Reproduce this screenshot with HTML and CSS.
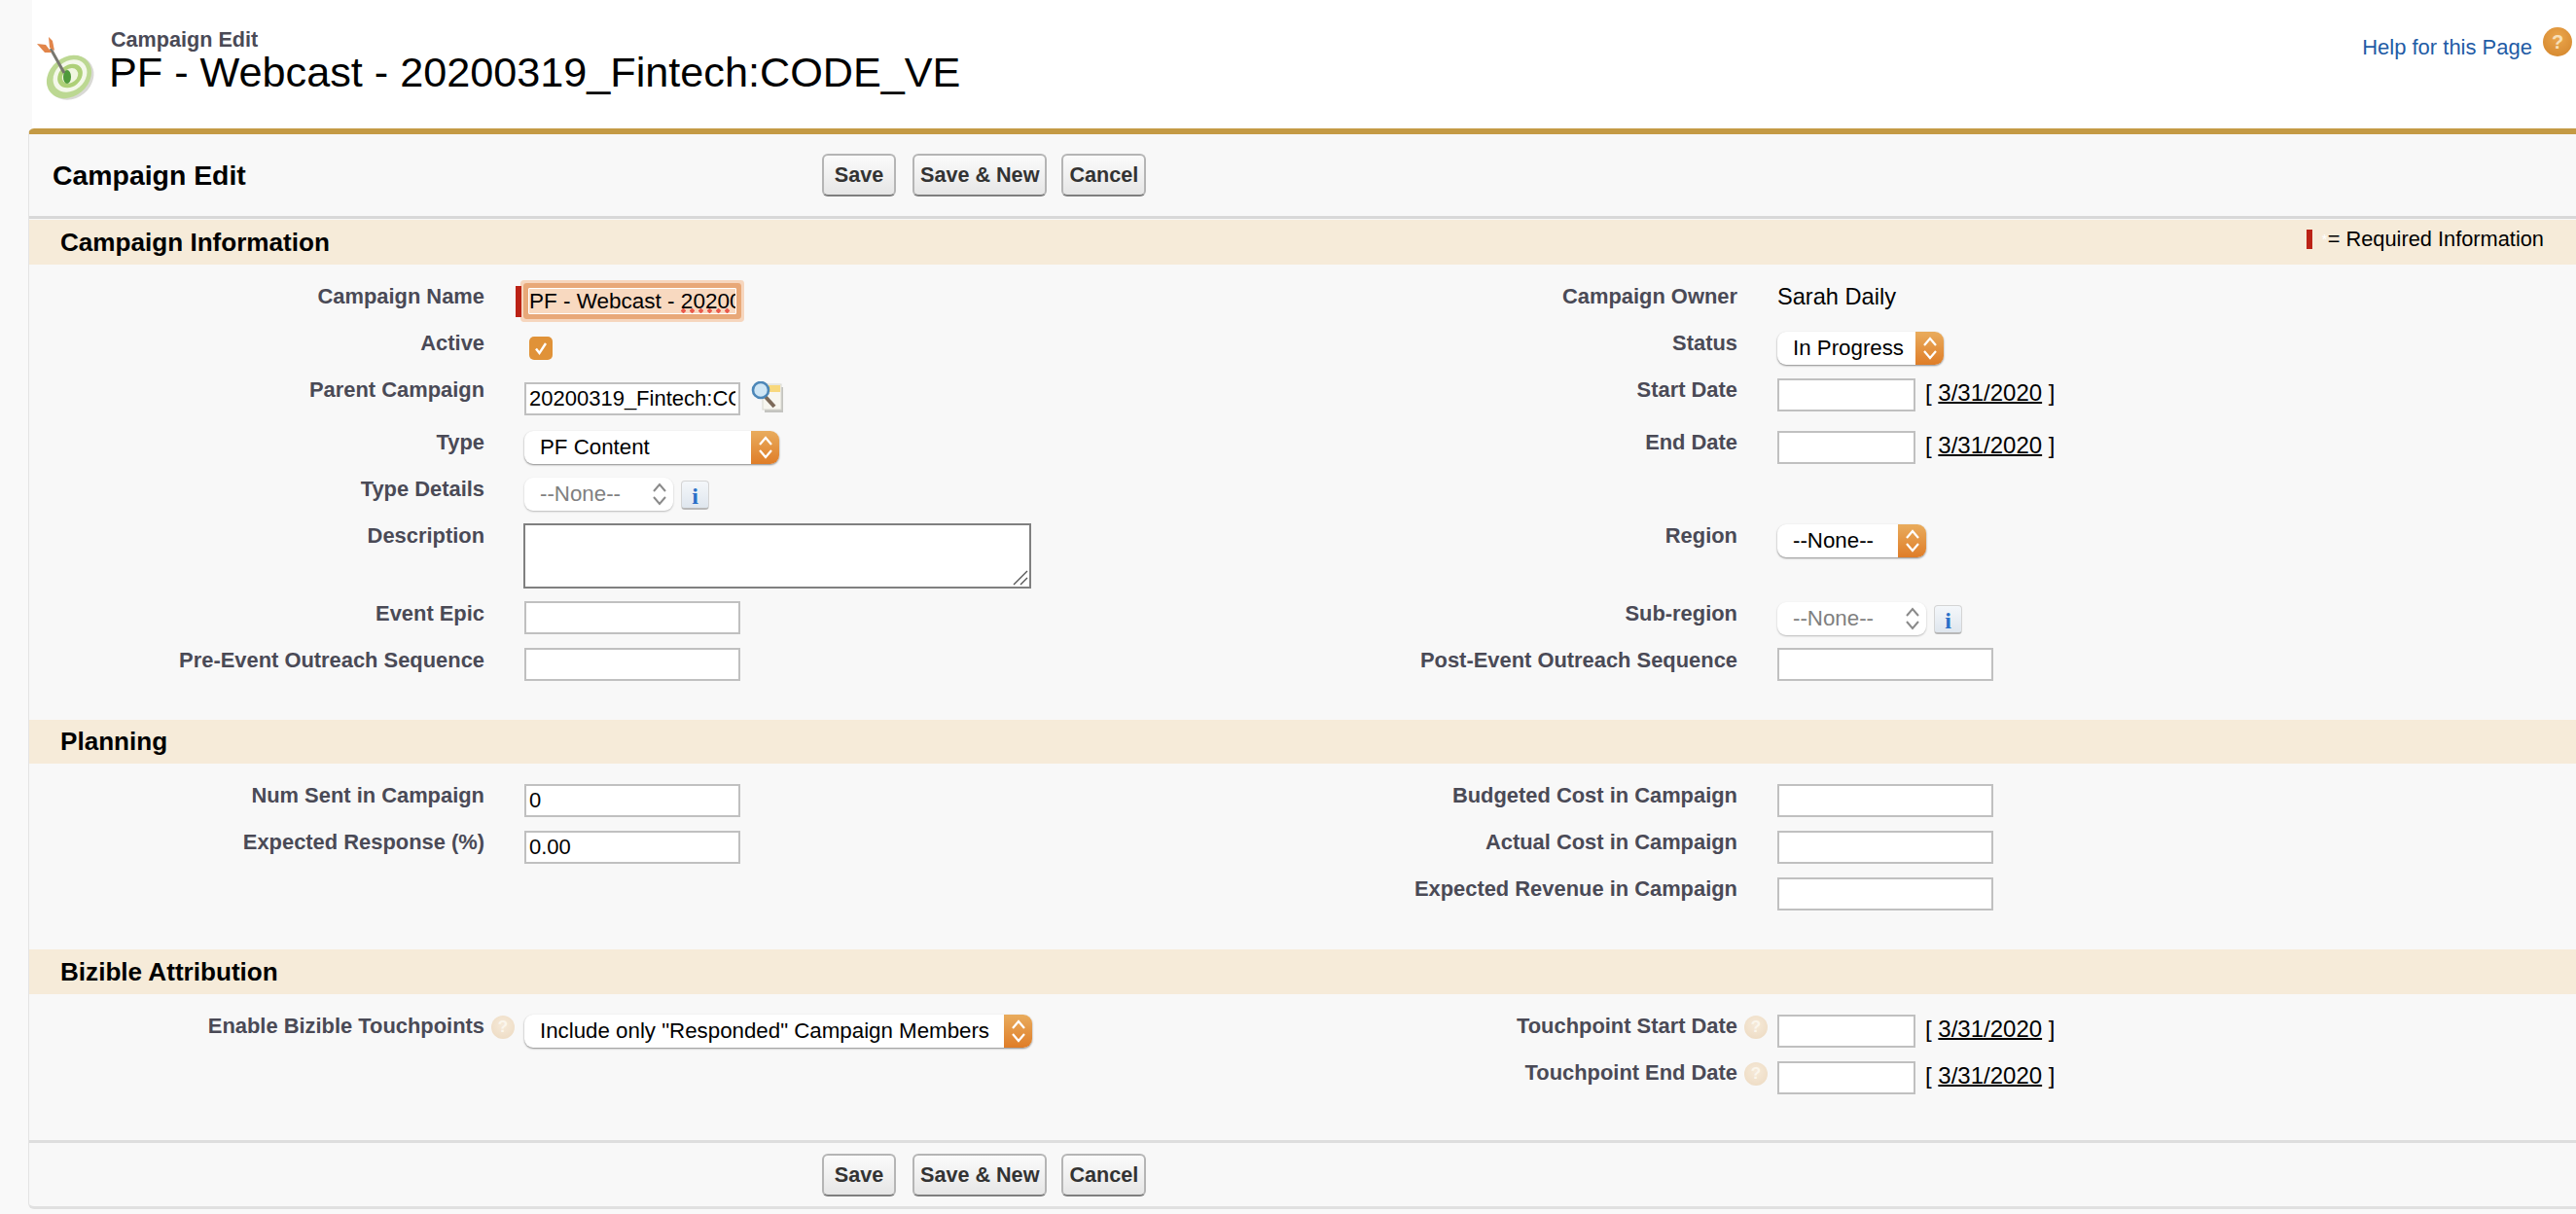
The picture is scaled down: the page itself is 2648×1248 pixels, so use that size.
FILE: index.html
```html
<!DOCTYPE html>
<html lang="en">
  <head>
    <meta charset="UTF-8" />
    <title>Campaign Edit</title>
    <link rel="stylesheet" href="styles.css">
  </head>
  <body>
    <div class="page">
      <div class="page-head">
        <svg class="target-icon" width="62" height="72" viewBox="0 0 62 72">
          <ellipse cx="35" cy="43" rx="25" ry="21" transform="rotate(-40 35 43)" fill="#d9d9d5" />
          <ellipse cx="33" cy="42" rx="25" ry="20" transform="rotate(-40 33 42)" fill="#bcd892" />
          <ellipse cx="34" cy="41" rx="19" ry="15" transform="rotate(-40 34 41)" fill="#f4f8ea" />
          <ellipse cx="34" cy="41" rx="14" ry="11" transform="rotate(-40 34 41)" fill="#aed078" />
          <ellipse cx="34" cy="41" rx="9" ry="7" transform="rotate(-40 34 41)" fill="#f0f6e0" />
          <ellipse cx="31" cy="42" rx="4" ry="7" fill="#4f9a3c" />
          <path d="M14 13 L28 38" stroke="#77776f" stroke-width="3" />
          <path d="M0 8 L9 9 L15 17 L8 17 Z" fill="#e2854a" />
          <path d="M12 1 L16 5 L18 15 L13 12 Z" fill="#e2854a" />
        </svg>
        <div class="page-titles">
          <div class="page-type">Campaign Edit</div>
          <h1 class="page-name">PF - Webcast - 20200319_Fintech:CODE_VE</h1>
        </div>
        <div class="help-link">
          <a href="#">Help for this Page</a>
          <span class="help-circle">?</span>
        </div>
      </div>

      <form class="panel">
        <div class="button-row">
          <h2 class="panel-title">Campaign Edit</h2>
          <div class="buttons">
            <button type="button" class="btn btn-save">Save</button>
            <button type="button" class="btn btn-new">Save &amp; New</button>
            <button type="button" class="btn">Cancel</button>
          </div>
        </div>

        <div class="section-bar section-bar-first">
          <h3>Campaign Information</h3>
          <div class="required-note"><span class="required-mark"></span><span class="required-star">*</span>= Required Information</div>
        </div>
        <div class="form-grid grid-info">
          <label class="lbl">Campaign Name</label>
          <div class="field">
            <div class="focus-wrap">
              <span class="required-bar"></span>
              <input class="input input-focus" type="text" value="PF - Webcast - 20200319_Fintech:CODE_VE" spellcheck="false" />
              <span class="spell-dots"></span>
            </div>
          </div>
          <label class="lbl">Campaign Owner</label>
          <div class="field field-text">Sarah Daily</div>

          <label class="lbl">Active</label>
          <div class="field">
            <span class="check">
              <svg width="24" height="24" viewBox="0 0 24 24"><path d="M7 12.5 L10.5 17 L17 7" fill="none" stroke="#fff" stroke-width="2.4" /></svg>
            </span>
          </div>
          <label class="lbl">Status</label>
          <div class="field">
            <div class="select w-status"><span>In Progress</span><span class="select-arrows"><svg width="20" height="26" viewBox="0 0 20 26"><path d="M4 10 L10 3 L16 10 M4 16 L10 23 L16 16" fill="none" stroke="#fff" stroke-width="2.2" /></svg></span></div>
          </div>

          <label class="lbl">Parent Campaign</label>
          <div class="field field-low">
            <input class="input" type="text" value="20200319_Fintech:CODE_VE" />
            <svg class="lookup" width="34" height="32" viewBox="0 0 34 32">
              <rect x="14" y="6" width="19" height="26" fill="#c4c4c0" />
              <rect x="12" y="3" width="19" height="26" fill="#f7f6ef" stroke="#d8d8d0" />
              <rect x="13" y="4" width="17" height="7" fill="#f8d87c" />
              <path d="M14 15 L24 26" stroke="#7d6a58" stroke-width="4" />
              <circle cx="10" cy="9" r="8" fill="#cfe6f5" stroke="#4d87b8" stroke-width="2.6" />
            </svg>
          </div>
          <label class="lbl">Start Date</label>
          <div class="field">
            <input class="input input-date" type="text" />
            <span class="date-hint">[ <a href="#">3/31/2020</a> ]</span>
          </div>

          <label class="lbl">Type</label>
          <div class="field">
            <div class="select w-type"><span>PF Content</span><span class="select-arrows"><svg width="20" height="26" viewBox="0 0 20 26"><path d="M4 10 L10 3 L16 10 M4 16 L10 23 L16 16" fill="none" stroke="#fff" stroke-width="2.2" /></svg></span></div>
          </div>
          <label class="lbl">End Date</label>
          <div class="field">
            <input class="input input-date" type="text" />
            <span class="date-hint">[ <a href="#">3/31/2020</a> ]</span>
          </div>

          <label class="lbl">Type Details</label>
          <div class="field">
            <div class="select select-off w-none"><span>--None--</span><span class="select-arrows"><svg width="20" height="26" viewBox="0 0 20 26"><path d="M4 10 L10 3 L16 10 M4 16 L10 23 L16 16" fill="none" stroke="#8a8a8a" stroke-width="2" /></svg></span></div>
            <span class="info-btn">i</span>
          </div>
          <div></div>
          <div></div>

          <label class="lbl">Description</label>
          <div class="field field-tight">
            <div class="textarea-wrap">
              <textarea class="textarea"></textarea>
              <svg class="grip" width="16" height="16" viewBox="0 0 16 16"><path d="M1 15 L15 1 M8 15 L15 8" stroke="#555" stroke-width="1.4" /></svg>
            </div>
          </div>
          <label class="lbl">Region</label>
          <div class="field">
            <div class="select w-region"><span>--None--</span><span class="select-arrows"><svg width="20" height="26" viewBox="0 0 20 26"><path d="M4 10 L10 3 L16 10 M4 16 L10 23 L16 16" fill="none" stroke="#fff" stroke-width="2.2" /></svg></span></div>
          </div>

          <label class="lbl">Event Epic</label>
          <div class="field field-tight"><input class="input" type="text" /></div>
          <label class="lbl">Sub-region</label>
          <div class="field">
            <div class="select select-off w-none"><span>--None--</span><span class="select-arrows"><svg width="20" height="26" viewBox="0 0 20 26"><path d="M4 10 L10 3 L16 10 M4 16 L10 23 L16 16" fill="none" stroke="#8a8a8a" stroke-width="2" /></svg></span></div>
            <span class="info-btn">i</span>
          </div>

          <label class="lbl">Pre-Event Outreach Sequence</label>
          <div class="field field-tight"><input class="input" type="text" /></div>
          <label class="lbl">Post-Event Outreach Sequence</label>
          <div class="field field-tight"><input class="input" type="text" /></div>
        </div>

        <div class="section-bar section-bar-short">
          <h3>Planning</h3>
        </div>
        <div class="form-grid grid-planning">
          <label class="lbl">Num Sent in Campaign</label>
          <div class="field"><input class="input" type="text" value="0" /></div>
          <label class="lbl">Budgeted Cost in Campaign</label>
          <div class="field"><input class="input" type="text" /></div>

          <label class="lbl">Expected Response (%)</label>
          <div class="field"><input class="input" type="text" value="0.00" /></div>
          <label class="lbl">Actual Cost in Campaign</label>
          <div class="field"><input class="input" type="text" /></div>

          <div></div>
          <div></div>
          <label class="lbl">Expected Revenue in Campaign</label>
          <div class="field"><input class="input" type="text" /></div>
        </div>

        <div class="section-bar">
          <h3>Bizible Attribution</h3>
        </div>
        <div class="form-grid grid-bizible">
          <label class="lbl">Enable Bizible Touchpoints</label>
          <div class="field field-help">
            <span class="help-faded">?</span>
            <div class="select w-bizible"><span>Include only "Responded" Campaign Members</span><span class="select-arrows"><svg width="20" height="26" viewBox="0 0 20 26"><path d="M4 10 L10 3 L16 10 M4 16 L10 23 L16 16" fill="none" stroke="#fff" stroke-width="2.2" /></svg></span></div>
          </div>
          <label class="lbl">Touchpoint Start Date</label>
          <div class="field field-help">
            <span class="help-faded">?</span>
            <input class="input input-date" type="text" />
            <span class="date-hint">[ <a href="#">3/31/2020</a> ]</span>
          </div>

          <div></div>
          <div></div>
          <label class="lbl">Touchpoint End Date</label>
          <div class="field field-help">
            <span class="help-faded">?</span>
            <input class="input input-date" type="text" />
            <span class="date-hint">[ <a href="#">3/31/2020</a> ]</span>
          </div>
        </div>

        <div class="button-row button-row-bottom">
          <div class="buttons">
            <button type="button" class="btn btn-save">Save</button>
            <button type="button" class="btn btn-new">Save &amp; New</button>
            <button type="button" class="btn">Cancel</button>
          </div>
        </div>
      </form>
    </div>
  </body>
</html>
```

FILE: styles.css
```css
* {
  box-sizing: border-box;
}
html,
body {
  margin: 0;
  padding: 0;
}
body {
  font-family: "Liberation Sans", Arial, sans-serif;
  font-size: 22px;
  color: #000;
  background-color: #f9f9f9;
  height: 1248px;
  overflow: hidden;
}
.page {
  margin-left: 29px;
}
.page-head {
  display: flex;
  height: 132px;
  padding-top: 28px;
  padding-left: 9px;
  background: white;
  border-left: 4px solid #f9f9f9;
}
.target-icon {
  margin-top: 9px;
  margin-left: -4px;
  margin-right: 14px;
  flex: none;
}
.page-titles {
  flex: 1;
}
.page-type {
  font-size: 21.6px;
  font-weight: bold;
  color: #4a4a56;
  line-height: 24px;
  margin-top: 1px;
  margin-bottom: -5px;
}
.page-name {
  font-size: 43.2px;
  font-weight: normal;
  line-height: 52px;
  margin: 0 0 0 -2px;
}
.help-link {
  display: flex;
  align-items: flex-start;
  gap: 11px;
  padding-right: 4px;
}
.help-link a {
  color: #1f5ca6;
  text-decoration: none;
  line-height: 41px;
}
.help-circle {
  width: 30px;
  height: 30px;
  border-radius: 50%;
  background: radial-gradient(circle at 50% 35%, #eba64d, #d2842a);
  color: #f8e0b8;
  font-weight: bold;
  font-size: 20px;
  text-align: center;
  line-height: 30px;
}

.panel {
  background: #f8f8f8;
  border-top: 6px solid #c49a45;
  border-bottom: 3px solid #e0e0e0;
  border-left: 1px solid #e4e4e4;
  border-radius: 6px 0 0 6px;
  height: 1111px;
}
.button-row {
  display: flex;
  align-items: center;
  height: 87px;
  border-bottom: 3px solid #d8d8d8;
}
.panel-title {
  width: 815px;
  margin: 0;
  padding-left: 24px;
  font-size: 28.4px;
  font-weight: bold;
}
.buttons {
  display: flex;
  gap: 15px;
}
.btn {
  height: 44px;
  padding: 0 6px;
  font-family: "Liberation Sans", Arial, sans-serif;
  font-size: 21.6px;
  font-weight: bold;
  color: #333;
  background: linear-gradient(#fbfbfb, #e6e6e6);
  border: 2px solid #b5b5b5;
  border-bottom-color: #7f7f7f;
  border-radius: 6px;
}
.btn-save {
  min-width: 76px;
  margin-right: 2px;
}
.button-row-bottom {
  border-bottom: 0;
  border-top: 3px solid #dedede;
  height: 69px;
  padding-left: 815px;
}

.section-bar {
  display: flex;
  align-items: center;
  justify-content: space-between;
  height: 46px;
  padding-left: 32px;
  background: #f6ebd9;
}
.section-bar-first {
  margin-top: 1px;
}
.section-bar-short {
  height: 45px;
}
.section-bar h3 {
  margin: 0;
  font-size: 26.1px;
  font-weight: bold;
}
.required-note {
  display: flex;
  align-items: center;
  padding-right: 33px;
  font-size: 21.8px;
  margin-top: -6px;
}
.required-mark {
  width: 6px;
  height: 20px;
  margin-right: 10px;
  background: #bb2216;
}
.required-star {
  width: 6px;
  color: #fff;
  font-size: 14px;
}

.form-grid {
  display: grid;
  grid-template-columns: 468px 603px 685px 1fr;
  grid-auto-rows: 48px;
  padding-top: 19px;
}
.grid-info {
  grid-template-rows: 48px 48px 54px 48px 48px 80px 48px 48px;
  padding-bottom: 27px;
}
.grid-planning {
  padding-bottom: 28px;
}
.grid-bizible {
  padding-bottom: 35px;
}
.lbl {
  font-size: 21.9px;
  font-weight: bold;
  color: #4a4a56;
  line-height: 28px;
  text-align: right;
}
.field {
  display: flex;
  align-items: flex-start;
  padding-left: 41px;
  padding-top: 2px;
}
.field-tight {
  padding-top: 1px;
}
.field-low {
  padding-top: 6px;
}
.field-text {
  padding-top: 0;
  font-size: 23.6px;
  line-height: 29px;
}
.field-help {
  padding-left: 7px;
}
.input {
  width: 222px;
  height: 34px;
  padding: 0 3px;
  font-family: "Liberation Sans", Arial, sans-serif;
  font-size: 22px;
  color: #000;
  background: white;
  border: 2px solid #c0c0c0;
  border-radius: 0;
  outline: none;
}
.input-date {
  width: 142px;
}
.date-hint {
  margin-left: 10px;
  font-size: 24px;
  line-height: 30px;
}
.date-hint a {
  color: #000;
  text-decoration: underline;
  text-decoration-thickness: 2px;
}
.focus-wrap {
  position: relative;
  margin-left: 4px;
  margin-top: 3px;
}
.input-focus {
  display: block;
  width: 214px;
  height: 27px;
  padding: 0;
  font-size: 22.5px;
  background: #f8d9c0;
  border: 1px solid white;
  box-shadow: 0 0 0 5px #e8a878, 0 0 0 8px #f6d6be;
  border-radius: 1px;
}
.required-bar {
  position: absolute;
  left: -13px;
  top: -2px;
  width: 6px;
  height: 32px;
  background: #bb2216;
  z-index: 1;
}
.spell-dots {
  position: absolute;
  left: 157px;
  top: 21px;
  width: 54px;
  height: 5px;
  background: radial-gradient(circle at 2.5px 2.5px, #ea5a4c 2px, transparent 2.4px) repeat-x;
  background-size: 9px 5px;
}
.check {
  display: block;
  width: 24px;
  height: 24px;
  margin-left: 5px;
  margin-top: 5px;
  background: #e09238;
  border-radius: 5px;
}
.lookup {
  margin-left: 11px;
  margin-top: -1px;
}
.select {
  display: flex;
  justify-content: space-between;
  height: 34px;
  padding-left: 16px;
  font-size: 22.3px;
  line-height: 33px;
  background: white;
  border-radius: 9px;
  box-shadow: 0 1px 2px rgba(0, 0, 0, 0.45);
  overflow: hidden;
  white-space: nowrap;
}
.select-arrows {
  display: flex;
  align-items: center;
  justify-content: center;
  width: 29px;
  background: linear-gradient(#e9ac5d, #df7d28);
}
.select-off {
  color: #808080;
  box-shadow: 0 1px 2px rgba(0, 0, 0, 0.25);
}
.select-off .select-arrows {
  background: none;
}
.w-status {
  width: 171px;
}
.w-type {
  width: 262px;
}
.w-none,
.w-region {
  width: 153px;
}
.w-bizible {
  width: 522px;
}
.info-btn {
  width: 29px;
  height: 30px;
  margin-left: 8px;
  margin-top: 3px;
  font-family: "Liberation Serif", serif;
  font-weight: bold;
  font-size: 24px;
  line-height: 30px;
  text-align: center;
  color: #2a70c8;
  background: linear-gradient(#f4f7fa, #dfe6ee);
  border: 1px solid #d4d4d4;
  border-bottom: 2px solid #b8b8b8;
  border-radius: 4px;
}
.textarea-wrap {
  position: relative;
  margin-left: -1px;
}
.textarea {
  display: block;
  width: 522px;
  height: 67px;
  background: white;
  border: 2px solid #808080;
  border-radius: 0;
  resize: none;
}
.grip {
  position: absolute;
  right: 3px;
  bottom: 3px;
}
.help-faded {
  width: 24px;
  height: 24px;
  flex: none;
  margin-top: 1px;
  margin-right: 10px;
  border-radius: 50%;
  background: radial-gradient(circle at 50% 40%, #f6ead9, #ecd9c0);
  color: #fbf6ec;
  font-weight: bold;
  font-size: 17px;
  line-height: 24px;
  text-align: center;
}
```
